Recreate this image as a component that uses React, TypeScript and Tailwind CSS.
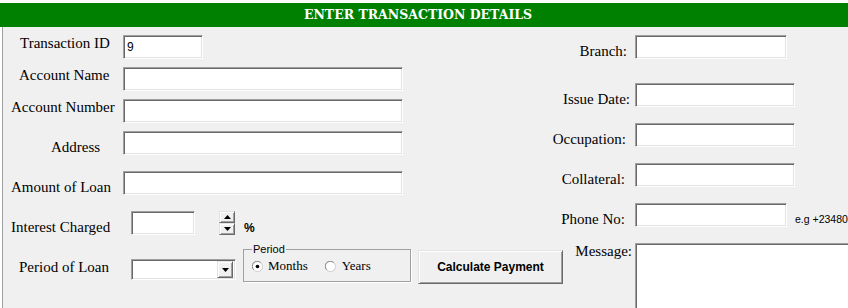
import React from 'react'

const serif = "font-['DejaVu_Serif',serif]"
const times = "font-['Liberation_Serif','Times_New_Roman',serif]"
const sans = "font-['Liberation_Sans',Arial,sans-serif]"

// sunken 3D box used by text inputs
const sunken =
  'bg-white border border-t-[#a0a0a0] border-l-[#a0a0a0] border-b-white border-r-white ' +
  'shadow-[inset_1px_1px_0_#696969,inset_-1px_-1px_0_#e3e3e3]'

// raised 3D box used by buttons
const raised =
  'bg-[#f0f0f0] border border-t-[#e3e3e3] border-l-[#e3e3e3] border-b-[#696969] border-r-[#696969] ' +
  'shadow-[inset_1px_1px_0_#ffffff,inset_-1px_-1px_0_#a0a0a0]'

const Box = ({ w, h = 'h-[24px]', value }: { w: string; h?: string; value?: string }) => (
  <div className={`${sunken} ${w} ${h} shrink-0 px-[3px] pt-[3px] text-[12px] leading-[16px] ${sans}`}>
    {value}
  </div>
)

const Label = ({ children, cls }: { children: React.ReactNode; cls: string }) => (
  <div className={`${times} text-[15px] leading-[16px] text-black whitespace-nowrap ${cls}`}>{children}</div>
)

const Arrow = ({ up }: { up?: boolean }) => (
  <svg width="7" height="4" viewBox="0 0 7 4">
    <path d={up ? 'M0 4 L3.5 0 L7 4 Z' : 'M0 0 L7 0 L3.5 4 Z'} fill="#000" />
  </svg>
)

const Radio = ({ on }: { on?: boolean }) => (
  <svg width="11" height="11" viewBox="0 0 12 12" className="shrink-0">
    <circle cx="6" cy="6" r="5.5" fill="#fff" stroke="#c8c8c8" />
    <path d="M1.8 9.5 A5 5 0 0 1 9.5 1.8" fill="none" stroke="#808080" />
    {on && <circle cx="6" cy="6" r="2" fill="#000" />}
  </svg>
)

export default function App() {
  return (
    <div className="w-[848px] h-[308px] overflow-hidden bg-white pt-[3px] flex flex-col">
      {/* title bar */}
      <div className={`h-[24px] shrink-0 bg-[#008000] flex items-center justify-center pr-[12px] text-white font-bold text-[12.5px] ${serif}`}>
        ENTER TRANSACTION DETAILS
      </div>

      <div className="flex-1 ml-[2px] border-l border-[#a0a0a0] bg-[#f0f0f0] flex">
        {/* left column */}
        <div className="w-[547px] shrink-0 flex flex-col">
          <div className="flex h-[24px] mt-[8px]">
            <div className="w-[120px] shrink-0"><Label cls="pl-[17px] mt-0">Transaction ID</Label></div>
            <Box w="w-[80px]" value="9" />
          </div>
          <div className="flex h-[24px] mt-[8px]">
            <div className="w-[120px] shrink-0"><Label cls="pl-[16px] mt-0">Account Name</Label></div>
            <Box w="w-[280px]" />
          </div>
          <div className="flex h-[24px] mt-[8px]">
            <div className="w-[120px] shrink-0"><Label cls="pl-[8px] mt-0">Account Number</Label></div>
            <Box w="w-[280px]" />
          </div>
          <div className="flex h-[24px] mt-[8px]">
            <div className="w-[120px] shrink-0"><Label cls="pl-[48px] mt-[8px]">Address</Label></div>
            <Box w="w-[280px]" />
          </div>
          <div className="flex h-[24px] mt-[16px]">
            <div className="w-[120px] shrink-0"><Label cls="pl-[8px] mt-[8px]">Amount of Loan</Label></div>
            <Box w="w-[280px]" />
          </div>
          <div className="flex h-[24px] mt-[16px]">
            <div className="w-[128px] shrink-0"><Label cls="pl-[8px] mt-[8px]">Interest Charged</Label></div>
            <Box w="w-[64px]" />
            <div className="ml-[24px] flex flex-col w-[16px]">
              <div className={`${raised} h-[12px] flex items-center justify-center`}><Arrow up /></div>
              <div className={`${raised} h-[12px] flex items-center justify-center`}><Arrow /></div>
            </div>
            <div className={`${sans} font-bold text-[12px] ml-[9px] mt-[10px] leading-[14px]`}>%</div>
          </div>
          <div className="flex h-[40px] mt-[9px]">
            <div className="w-[128px] shrink-0"><Label cls="pl-[16px] mt-[15px]">Period of Loan</Label></div>
            <div className={`${sunken} w-[105px] h-[21px] mt-[15px] flex justify-end items-center pr-[2px] shrink-0`}>
              <div className={`${raised} w-[16px] h-[17px] flex items-center justify-center`}><Arrow /></div>
            </div>
            {/* group box */}
            <fieldset className="ml-[7px] w-[168px] h-[38px] border border-[#a0a0a0] shadow-[1px_1px_0_#fff] px-[8px] pb-0 pt-0 shrink-0">
              <legend className={`${sans} text-[11px] leading-[11px] px-[1px] text-black`}>Period</legend>
              <div className="flex items-center mt-[4px]">
                <Radio on />
                <span className={`${times} text-[13px] leading-[14px] ml-[5px] text-black`}>Months</span>
                <span className="ml-[17px]"><Radio /></span>
                <span className={`${times} text-[13px] leading-[14px] ml-[6px] text-black`}>Years</span>
              </div>
            </fieldset>
            <button className={`${raised} ${sans} ml-[7px] mt-[6px] w-[145px] h-[34px] shrink-0 font-bold text-[12px] text-black`}>
              Calculate Payment
            </button>
          </div>
        </div>

        {/* right column */}
        <div className="flex-1 flex flex-col">
          <div className="flex h-[24px] mt-[8px]">
            <div className="w-[85px] shrink-0"><Label cls="text-right pr-[8px] mt-[8px]">Branch:</Label></div>
            <Box w="w-[152px]" />
          </div>
          <div className="flex h-[24px] mt-[24px]">
            <div className="w-[85px] shrink-0"><Label cls="text-right pr-[5px] mt-[8px]">Issue Date:</Label></div>
            <Box w="w-[160px]" />
          </div>
          <div className="flex h-[24px] mt-[16px]">
            <div className="w-[85px] shrink-0"><Label cls="text-right pr-[9px] mt-[8px]">Occupation:</Label></div>
            <Box w="w-[160px]" />
          </div>
          <div className="flex h-[24px] mt-[16px]">
            <div className="w-[85px] shrink-0"><Label cls="text-right pr-[10px] mt-[8px]">Collateral:</Label></div>
            <Box w="w-[160px]" />
          </div>
          <div className="flex h-[24px] mt-[16px]">
            <div className="w-[85px] shrink-0"><Label cls="text-right pr-[10px] mt-[8px]">Phone No:</Label></div>
            <Box w="w-[152px]" />
            <div className={`${sans} text-[10.5px] ml-[8px] mt-[10px] leading-[13px] whitespace-nowrap text-black`}>e.g +23480</div>
          </div>
          <div className="flex mt-[16px]">
            <div className="w-[85px] shrink-0"><Label cls="text-right pr-[3px] mt-0">Message:</Label></div>
            <Box w="w-[230px]" h="h-[90px]" />
          </div>
        </div>
      </div>
    </div>
  )
}
